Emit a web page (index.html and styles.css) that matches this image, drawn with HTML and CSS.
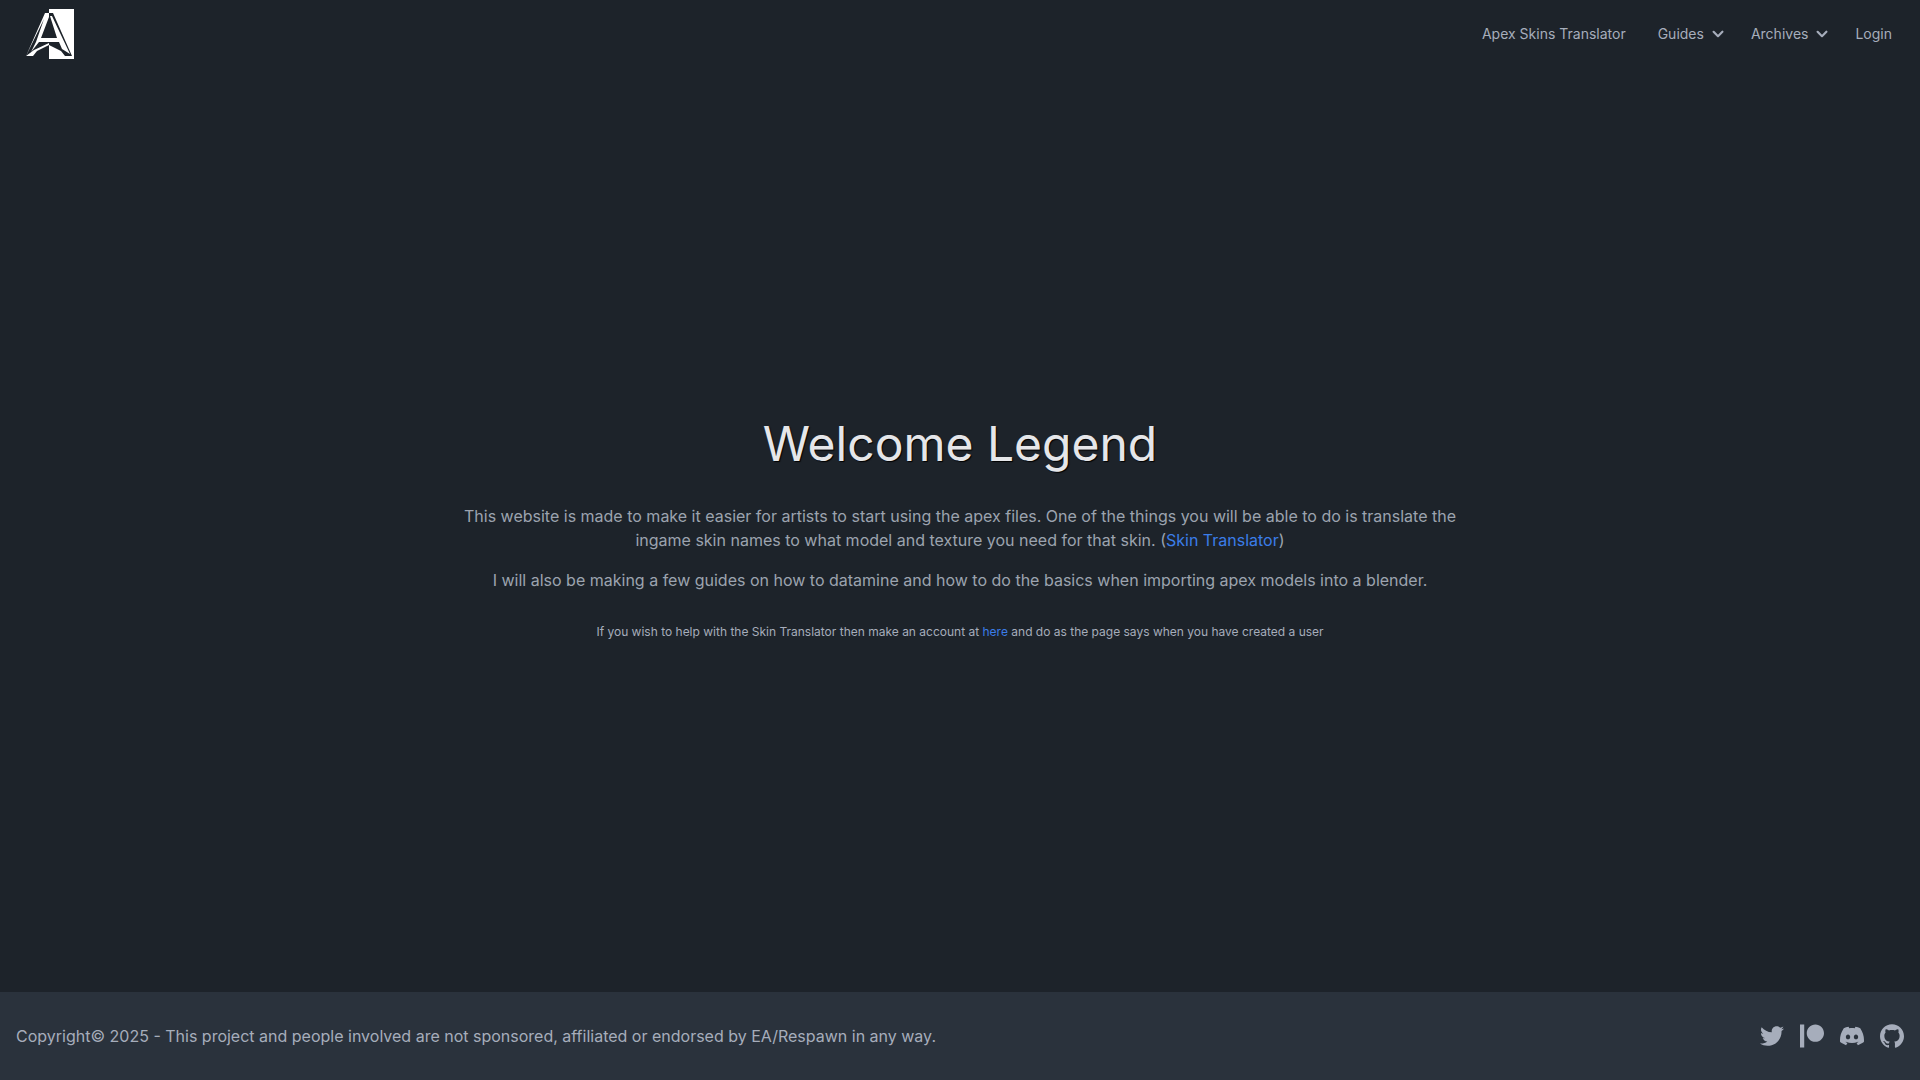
FILE: index.html
```
<!DOCTYPE html>
<html lang="en">
<head>
    <meta charset="UTF-8">
    <meta name="viewport" content="width=device-width, initial-scale=1.0">
    <title>Welcome Legend</title>
    <link rel="stylesheet" href="styles.css">
</head>
<body>

<!-- Navbar -->
<header class="navbar">
    <a href="#" class="logo" aria-label="Home">
        <svg viewBox="0 0 50 50" width="50" height="50">
            <path fill="#fff" d="M25 0H50V50H25Z"/>
            <!-- left half -->
            <path fill="#fff" d="M21 4H25V8L17 29H25V33H15L7 43 12 33 20 10 3 45 2 47Z"/>
            <path fill="#fff" d="M25 34V36L13 42 9 47H2L10 41Z"/>
            <!-- right half -->
            <path fill="#1d232a" d="M25 4H29L48 47H41L37 42 25 36Z"/>
            <path fill="#fff" d="M26 7L28 7 46 45 38 40 35 33H25V29H33Z"/>
        </svg>
    </a>
    <nav>
        <ul class="menu">
            <li><a href="#">Apex Skins Translator</a></li>
            <li>
                <button type="button">Guides
                    <svg viewBox="0 0 20 20" width="22" height="22"><path d="M5.293 7.293a1 1 0 011.414 0L10 10.586l3.293-3.293a1 1 0 111.414 1.414l-4 4a1 1 0 01-1.414 0l-4-4a1 1 0 010-1.414z"/></svg>
                </button>
            </li>
            <li>
                <button type="button">Archives
                    <svg viewBox="0 0 20 20" width="22" height="22"><path d="M5.293 7.293a1 1 0 011.414 0L10 10.586l3.293-3.293a1 1 0 111.414 1.414l-4 4a1 1 0 01-1.414 0l-4-4a1 1 0 010-1.414z"/></svg>
                </button>
            </li>
            <li><a href="#">Login</a></li>
        </ul>
    </nav>
</header>

<main class="hero">
    <div class="hero-content">
        <h1>Welcome Legend</h1>
        <p>This website is made to make it easier for artists to start using the apex files. One of the things you will be able to do is translate the ingame skin names to what model and texture you need for that skin. (<a href="#">Skin Translator</a>)</p>
        <p>I will also be making a few guides on how to datamine and how to do the basics when importing apex models into a blender.</p>
        <p class="small">If you wish to help with the Skin Translator then make an account at <a href="#">here</a> and do as the page says when you have created a user</p>
    </div>
</main>

<footer class="footer">
    <p>Copyright© 2025 - This project and people involved are not sponsored, affiliated or endorsed by EA/Respawn in any way.</p>
    <div class="social">
        <a href="#" aria-label="Twitter">
            <svg viewBox="0 0 24 24" width="24" height="24"><path d="M24 4.557c-.883.392-1.832.656-2.828.775 1.017-.609 1.798-1.574 2.165-2.724-.951.564-2.005.974-3.127 1.195-.897-.957-2.178-1.555-3.594-1.555-3.179 0-5.515 2.966-4.797 6.045-4.091-.205-7.719-2.165-10.148-5.144-1.29 2.213-.669 5.108 1.523 6.574-.806-.026-1.566-.247-2.229-.616-.054 2.281 1.581 4.415 3.949 4.89-.693.188-1.452.232-2.224.084.626 1.956 2.444 3.379 4.6 3.419-2.07 1.623-4.678 2.348-7.29 2.04 2.179 1.397 4.768 2.212 7.548 2.212 9.142 0 14.307-7.721 13.995-14.646.962-.695 1.797-1.562 2.457-2.549z"/></svg>
        </a>
        <a href="#" aria-label="Patreon">
            <svg viewBox="0 0 24 24" width="24" height="24"><path d="M0 .48v23.04h4.22V.48zm15.385 0c-4.764 0-8.641 3.88-8.641 8.65 0 4.755 3.877 8.623 8.641 8.623 4.75 0 8.615-3.868 8.615-8.623C24 4.36 20.136.48 15.385.48z"/></svg>
        </a>
        <a href="#" aria-label="Discord">
            <svg viewBox="0 0 24 24" width="24" height="24"><path d="M20.317 4.3698a19.7913 19.7913 0 00-4.8851-1.5152.0741.0741 0 00-.0785.0371c-.211.3753-.4447.8648-.6083 1.2495-1.8447-.2762-3.68-.2762-5.4868 0-.1636-.3933-.4058-.8742-.6177-1.2495a.077.077 0 00-.0785-.037 19.7363 19.7363 0 00-4.8852 1.515.0699.0699 0 00-.0321.0277C.5334 9.0458-.319 13.5799.0992 18.0578a.0824.0824 0 00.0312.0561c2.0528 1.5076 4.0413 2.4228 5.9929 3.0294a.0777.0777 0 00.0842-.0276c.4616-.6304.8731-1.2952 1.226-1.9942a.076.076 0 00-.0416-.1057c-.6528-.2476-1.2743-.5495-1.8722-.8923a.077.077 0 01-.0076-.1277c.1258-.0943.2517-.1923.3718-.2914a.0743.0743 0 01.0776-.0105c3.9278 1.7933 8.18 1.7933 12.0614 0a.0739.0739 0 01.0785.0095c.1202.099.246.1981.3728.2924a.077.077 0 01-.0066.1276 12.2986 12.2986 0 01-1.873.8914.0766.0766 0 00-.0407.1067c.3604.698.7719 1.3628 1.225 1.9932a.076.076 0 00.0842.0286c1.961-.6067 3.9495-1.5219 6.0023-3.0294a.077.077 0 00.0313-.0552c.5004-5.177-.8382-9.6739-3.5485-13.6604a.061.061 0 00-.0312-.0286zM8.02 15.3312c-1.1825 0-2.1569-1.0857-2.1569-2.419 0-1.3332.9555-2.4189 2.157-2.4189 1.2108 0 2.1757 1.0952 2.1568 2.419 0 1.3332-.9555 2.4189-2.1569 2.4189zm7.9748 0c-1.1825 0-2.1569-1.0857-2.1569-2.419 0-1.3332.9554-2.4189 2.1569-2.4189 1.2108 0 2.1757 1.0952 2.1568 2.419 0 1.3332-.946 2.4189-2.1568 2.4189z"/></svg>
        </a>
        <a href="#" aria-label="GitHub">
            <svg viewBox="0 0 24 24" width="24" height="24"><path d="M12 .297c-6.63 0-12 5.373-12 12 0 5.303 3.438 9.8 8.205 11.385.6.113.82-.258.82-.577 0-.285-.01-1.04-.015-2.04-3.338.724-4.042-1.61-4.042-1.61C4.422 18.07 3.633 17.7 3.633 17.7c-1.087-.744.084-.729.084-.729 1.205.084 1.838 1.236 1.838 1.236 1.07 1.835 2.809 1.305 3.495.998.108-.776.417-1.305.76-1.605-2.665-.3-5.466-1.332-5.466-5.93 0-1.31.465-2.38 1.235-3.22-.135-.303-.54-1.523.105-3.176 0 0 1.005-.322 3.3 1.23.96-.267 1.98-.399 3-.405 1.02.006 2.04.138 3 .405 2.28-1.552 3.285-1.23 3.285-1.23.645 1.653.24 2.873.12 3.176.765.84 1.23 1.91 1.23 3.22 0 4.61-2.805 5.625-5.475 5.92.42.36.81 1.096.81 2.22 0 1.606-.015 2.896-.015 3.286 0 .315.21.69.825.57C20.565 22.092 24 17.592 24 12.297c0-6.627-5.373-12-12-12"/></svg>
        </a>
    </div>
</footer>

</body>
</html>
```
FILE: styles.css
```
* { box-sizing: border-box; margin: 0; padding: 0; }
body { min-height: 100vh; display: flex; flex-direction: column; font-family: Inter, sans-serif; font-size: 16px; line-height: 24px; background-color: #1d232a; color: #a6adbb; }
a { color: inherit; text-decoration: none; }
svg { display: block; fill: currentColor; }

/* Navbar */
.navbar { display: flex; align-items: center; justify-content: space-between; min-height: 68px; padding: 8px 12px; }
.logo { padding: 0 12px; }
.menu { display: flex; align-items: center; list-style: none; }
.menu a, .menu button { display: flex; align-items: center; gap: 3px; padding: 12px 16px; border: none; background: none; color: inherit; font: inherit; font-size: 14px; line-height: 22px; cursor: pointer; }
.menu button { padding-right: 6px; }

/* Hero */
.hero { flex: 1; display: flex; align-items: center; justify-content: center; padding: 16px; text-align: center; }
.hero-content { max-width: 1024px; color: #9ca3af; }
.hero-content h1 { margin-bottom: 36px; font-size: 48px; line-height: 48px; font-weight: 400; color: #e5e6e9; text-shadow: 1px 1px 1px #000; }
.hero-content p { margin-bottom: 16px; }
.hero-content a { color: #3b7de8; }
.hero-content .small { margin: 32px 0 0; font-size: 12px; line-height: 16px; color: #a6adbb; }

/* Footer */
.footer { display: flex; align-items: center; justify-content: space-between; min-height: 88px; padding: 16px; background-color: #2a323c; }
.social { display: flex; gap: 16px; }
```
